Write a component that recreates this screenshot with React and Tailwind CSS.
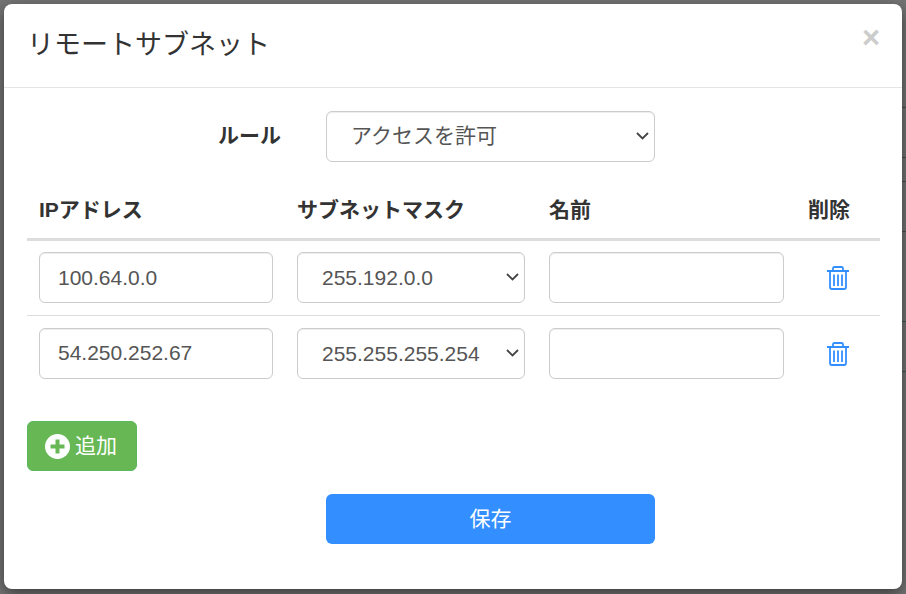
const rows = [
  { ip: '100.64.0.0', mask: '255.192.0.0' },
  { ip: '54.250.252.67', mask: '255.255.255.254' },
];

// bits of the page behind the modal that show at the right edge
const backLines = [
  { y: 107, color: '#4d4d4d' },
  { y: 157, color: '#4d4d4d' },
  { y: 181, color: '#4d4d4d' },
  { y: 231, color: '#4d4d4d' },
  { y: 321, color: '#3f5f3f' },
  { y: 371, color: '#3f5f3f' },
];

const fieldClass =
  'h-[51px] w-full rounded-[6px] border border-[#ccc] bg-white text-[21px] text-[#555] shadow-[inset_0_1px_1px_rgba(0,0,0,0.075)]';

const TrashIcon = () => (
  <svg width="22" height="24" viewBox="0 0 22 24" fill="none" stroke="#338fff" strokeWidth="1.800">
    <path d="M0 5h22" strokeWidth="2" />
    <path d="M6 4.500V2.500Q6 1 7.500 1h7Q16 1 16 2.500V4.500" />
    <path d="M3 5v16Q3 23 5 23h12q2 0 2-2V5" />
    <path d="M7 8.500v11.500M11 8.500v11.500M15 8.500v11.500" />
  </svg>
);

const Chevron = () => (
  <svg
    className="pointer-events-none absolute right-[6px] top-[21px]"
    width="13"
    height="8"
    viewBox="0 0 13 8"
    fill="none"
    stroke="#444"
    strokeWidth="1.800"
  >
    <path d="M1 1l5.500 5.500L12 1" />
  </svg>
);

const App = () => {
  return (
    <div
      className="relative h-[594px] w-[906px] overflow-hidden bg-[#747474] pl-1 pt-1 text-[21px] text-[#333]"
      style={{ fontFamily: '"Liberation Sans", "Noto Sans CJK JP", sans-serif' }}
    >
      {backLines.map((line) => (
        <div
          key={line.y}
          className="absolute right-0 h-px w-1"
          style={{ top: line.y, backgroundColor: line.color }}
        />
      ))}

      <div className="relative h-[585px] w-[898px] rounded-[8px] bg-white shadow-[0_5px_15px_rgba(0,0,0,0.5)]">
        <div className="relative h-[84px] border-b border-[#e5e5e5] pl-[23px] pt-[23px]">
          <h4 className="text-[27px] leading-[36px]">リモートサブネット</h4>
          <span className="absolute right-[22px] top-[16px] text-[31px] font-bold leading-[36px] text-[#ccc]">×</span>
        </div>

        <div className="px-[23px]">
          <div className="mt-[23px] flex h-[51px] items-center">
            <label className="mb-[2px] w-[254px] text-right font-bold">ルール</label>
            <div className="relative ml-[45px] w-[329px]">
              <select defaultValue="allow" className={`${fieldClass} appearance-none pb-[2px] pl-[24px]`}>
                <option value="allow">アクセスを許可</option>
              </select>
              <Chevron />
            </div>
          </div>

          <table className="mt-[18px] w-[853px] table-fixed">
            <thead>
              <tr className="h-[59px] border-b-[3px] border-[#ddd] text-left">
                <th className="w-[258px] px-3 pt-[2px] font-bold">IPアドレス</th>
                <th className="w-[252px] px-3 pt-[2px] font-bold">サブネットマスク</th>
                <th className="w-[259px] px-3 pt-[2px] font-bold">名前</th>
                <th className="w-[84px] px-3 pt-[2px] font-bold">削除</th>
              </tr>
            </thead>
            <tbody>
              {rows.map((row, index) => (
                <tr key={row.ip} className={`h-[76px] ${index === 0 ? 'border-b border-[#ddd]' : ''}`}>
                  <td className="px-3">
                    <input defaultValue={row.ip} className={`${fieldClass} px-[18px]`} />
                  </td>
                  <td className="px-3">
                    <div className="relative w-[228px]">
                      <select defaultValue={row.mask} className={`${fieldClass} appearance-none pl-[24px]`}>
                        <option>{row.mask}</option>
                      </select>
                      <Chevron />
                    </div>
                  </td>
                  <td className="px-3">
                    <input className={`${fieldClass} px-[18px]`} />
                  </td>
                  <td className="px-3">
                    <div className={`flex justify-center ${index === 1 ? 'pt-[2px]' : ''}`}>
                      <TrashIcon />
                    </div>
                  </td>
                </tr>
              ))}
            </tbody>
          </table>

          <button className="mt-[30px] flex h-[50px] w-[110px] items-center gap-[5px] rounded-[6px] border border-[#5cb85c] bg-[#67b855] pl-[17px] text-white">
            <svg width="25" height="25" viewBox="0 0 25 25">
              <circle cx="12.500" cy="12.500" r="12.500" fill="#fff" />
              <path d="M12.500 5.500v14M5.500 12.500h14" stroke="#67b855" strokeWidth="4" />
            </svg>
            <span>追加</span>
          </button>

          <div className="mt-[23px] pl-[299px]">
            <button className="h-[50px] w-[329px] rounded-[6px] bg-[#338fff] text-white">保存</button>
          </div>
        </div>
      </div>
    </div>
  );
};

export default App;
